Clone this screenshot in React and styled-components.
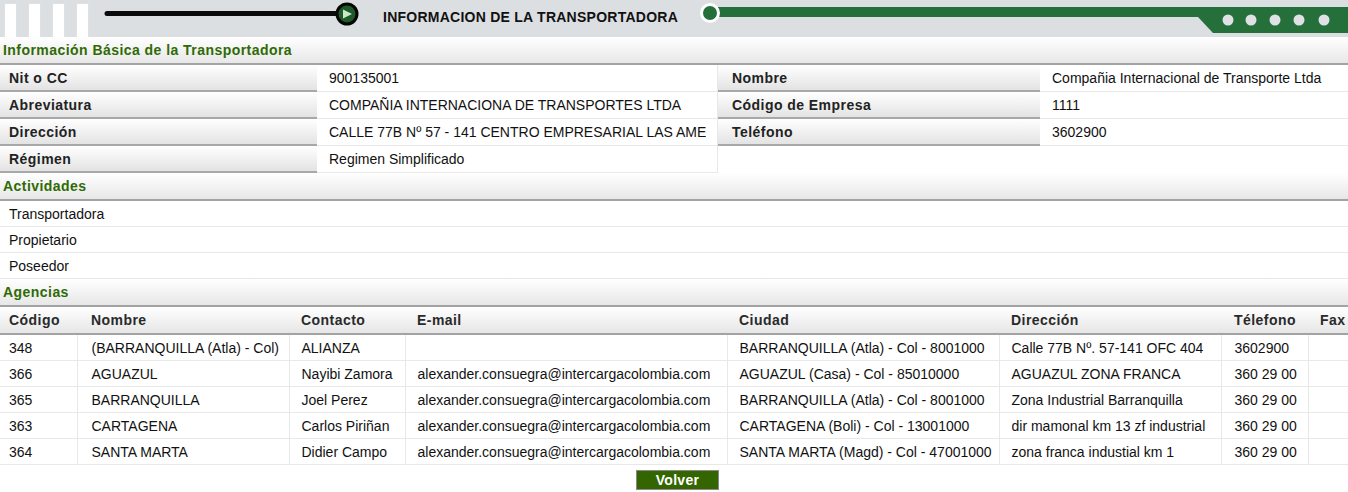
import React from 'react'
import styled, { createGlobalStyle } from 'styled-components'

const GlobalStyle = createGlobalStyle`
  html, body {
    margin: 0;
    padding: 0;
    background: #fff;
    overflow: hidden;
  }
  body {
    font-family: "Liberation Sans", Arial, sans-serif;
    font-size: 14px;
    color: #111;
  }
`

const Page = styled.div`
  width: 1348px;
  display: flex;
  flex-direction: column;
`

const Header = styled.header`
  display: flex;
  align-items: stretch;
  height: 37px;
  background: #dcdfe2;
  padding-left: 5px;
`

const Stripes = styled.div`
  display: flex;
  gap: 13px;
  padding-top: 4px;
`

const Stripe = styled.div`
  width: 11px;
  background: #fff;
  box-shadow: 0 0 1px #e9ecee;
`

const Slider = styled.svg`
  margin-left: 12px;
  flex: none;
`

const HeaderTitle = styled.h1`
  margin: 0 0 0 21px;
  font-size: 14px;
  letter-spacing: 0.25px;
  font-weight: bold;
  color: #111;
  line-height: 35px;
  white-space: nowrap;
`

const GreenTrack = styled.div`
  flex: 1;
  display: flex;
  margin-left: 22px;
`

const GreenDot = styled.div`
  width: 14px;
  height: 14px;
  margin-top: 3px;
  border-radius: 50%;
  background: #256f3b;
  border: 3px solid #fff;
  flex: none;
  position: relative;
  z-index: 1;
`

const GreenBar = styled.div`
  flex: 1;
  height: 10px;
  margin-top: 7px;
  margin-left: -2px;
  background: #256f3b;
`

const GreenEnd = styled.svg`
  flex: none;
  display: block;
`

const SectionBand = styled.div`
  height: 26px;
  display: flex;
  align-items: center;
  padding-left: 3px;
  background: linear-gradient(#ffffff, #e7e7e7);
  border-bottom: 2px solid #a3a3a3;
  color: #2f6a05;
  font-weight: bold;
  font-size: 14px;
  letter-spacing: 0.45px;
`

const InfoGrid = styled.div`
  display: grid;
  grid-template-columns: 317px 401px 322px 1fr;
`

const InfoLabel = styled.div`
  height: 25px;
  display: flex;
  align-items: center;
  padding-left: ${({ $pad }) => $pad || 9}px;
  background: linear-gradient(#ffffff, #e3e3e3);
  border-bottom: 2px solid #a8a8a8;
  font-weight: bold;
  letter-spacing: 0.45px;
  color: #222;
`

const InfoValue = styled.div`
  height: 26px;
  padding: 0 11px 0 12px;
  background: #fff;
  border-bottom: 1px solid #e8e8e8;
  border-right: ${({ $edge }) => ($edge ? '1px solid #e8e8e8' : 'none')};
  min-width: 0;
  color: #111;
`

const ValueText = styled.span`
  display: block;
  line-height: 26px;
  white-space: nowrap;
  overflow: hidden;
`

const Blank = styled.div`
  height: 27px;
`

const ListRow = styled.div`
  height: 25px;
  display: flex;
  align-items: center;
  padding-left: 9px;
  border-bottom: 1px solid #e8e8e8;
`

const Table = styled.table`
  width: 1368px;
  border-collapse: collapse;
  table-layout: fixed;
`

const Th = styled.th`
  height: 26px;
  padding: 0 0 0 ${({ $pad }) => $pad || 12}px;
  text-align: left;
  font-weight: bold;
  letter-spacing: 0.45px;
  color: #2a2a2a;
  background: linear-gradient(#ffffff, #e6e6e6);
  border-bottom: 2px solid #a3a3a3;
  white-space: nowrap;
  overflow: hidden;
`

const Td = styled.td`
  height: 25px;
  padding: 0 0 0 ${({ $pad }) => $pad || 12}px;
  border-bottom: 1px solid #e8e8e8;
  border-left: ${({ $first }) => ($first ? 'none' : '1px solid #e8e8e8')};
  white-space: nowrap;
  overflow: hidden;
  color: #111;
`

const Footer = styled.div`
  display: flex;
  justify-content: center;
  padding: 5px 0 0 7px;
`

const Button = styled.button`
  width: 83px;
  height: 20px;
  background: #336600;
  color: #fff;
  font-family: "Liberation Sans", Arial, sans-serif;
  font-weight: bold;
  font-size: 14px;
  letter-spacing: 0.3px;
  border: 1px solid #8a8a8a;
  padding: 0;
  cursor: pointer;
`

const info = [
  ['Nit o CC', '900135001', 'Nombre', 'Compañia Internacional de Transporte Ltda'],
  ['Abreviatura', 'COMPAÑIA INTERNACIONA DE TRANSPORTES LTDA', 'Código de Empresa', '1111'],
  ['Dirección', 'CALLE 77B Nº 57 - 141 CENTRO EMPRESARIAL LAS AMERICAS', 'Teléfono', '3602900'],
  ['Régimen', 'Regimen Simplificado'],
]

const actividades = ['Transportadora', 'Propietario', 'Poseedor']

const cols = [
  { title: 'Código', width: 77, pad: 9 },
  { title: 'Nombre', width: 212, pad: 14 },
  { title: 'Contacto', width: 116 },
  { title: 'E-mail', width: 322 },
  { title: 'Ciudad', width: 272 },
  { title: 'Dirección', width: 222 },
  { title: 'Télefono', width: 87, pad: 13 },
  { title: 'Fax', width: 60 },
]

const mail = 'alexander.consuegra@intercargacolombia.com'

const agencias = [
  ['348', '(BARRANQUILLA (Atla) - Col)', 'ALIANZA', '', 'BARRANQUILLA (Atla) - Col - 8001000', 'Calle 77B Nº. 57-141 OFC 404', '3602900', ''],
  ['366', 'AGUAZUL', 'Nayibi Zamora', mail, 'AGUAZUL (Casa) - Col - 85010000', 'AGUAZUL ZONA FRANCA', '360 29 00', ''],
  ['365', 'BARRANQUILLA', 'Joel Perez', mail, 'BARRANQUILLA (Atla) - Col - 8001000', 'Zona Industrial Barranquilla', '360 29 00', ''],
  ['363', 'CARTAGENA', 'Carlos Piriñan', mail, 'CARTAGENA (Boli) - Col - 13001000', 'dir mamonal km 13 zf industrial', '360 29 00', ''],
  ['364', 'SANTA MARTA', 'Didier Campo', mail, 'SANTA MARTA (Magd) - Col - 47001000', 'zona franca industial km 1', '360 29 00', ''],
]

const TopBar = () => (
  <Header>
    <Stripes>
      <Stripe />
      <Stripe />
      <Stripe />
      <Stripe />
    </Stripes>
    <Slider width="262" height="36" viewBox="0 0 262 36">
      <line x1="7" y1="13.5" x2="240" y2="13.5" stroke="#0a0a0a" strokeWidth="5" strokeLinecap="round" />
      <circle cx="247" cy="14" r="10" fill="#1f5a2a" stroke="#050505" strokeWidth="3" />
      <path d="M243 9.5 L252 14 L243 18.5 Z" fill="#c9e8c9" />
    </Slider>
    <HeaderTitle>INFORMACION DE LA TRANSPORTADORA</HeaderTitle>
    <GreenTrack>
      <GreenDot />
      <GreenBar />
      <GreenEnd width="150" height="36" viewBox="0 0 150 36">
        <path d="M0 7 H150 V33 H15 L0 17 Z" fill="#256f3b" />
        {[30, 53, 77, 101, 126].map((x) => (
          <circle key={x} cx={x} cy="20" r="5.5" fill="#dfe2e4" />
        ))}
      </GreenEnd>
    </GreenTrack>
  </Header>
)

const App = () => (
  <Page>
    <GlobalStyle />
    <TopBar />

    <SectionBand>Información Básica de la Transportadora</SectionBand>
    <InfoGrid>
      {info.map(([l1, v1, l2, v2]) => (
        <React.Fragment key={l1}>
          <InfoLabel>{l1}</InfoLabel>
          <InfoValue $edge><ValueText>{v1}</ValueText></InfoValue>
          {l2 ? <InfoLabel $pad={14}>{l2}</InfoLabel> : <Blank />}
          {l2 ? <InfoValue><ValueText>{v2}</ValueText></InfoValue> : <Blank />}
        </React.Fragment>
      ))}
    </InfoGrid>

    <SectionBand>Actividades</SectionBand>
    {actividades.map((a) => (
      <ListRow key={a}>{a}</ListRow>
    ))}

    <SectionBand>Agencias</SectionBand>
    <Table>
      <colgroup>
        {cols.map((c) => (
          <col key={c.title} style={{ width: c.width }} />
        ))}
      </colgroup>
      <thead>
        <tr>
          {cols.map((c) => (
            <Th key={c.title} $pad={c.pad}>{c.title}</Th>
          ))}
        </tr>
      </thead>
      <tbody>
        {agencias.map((row) => (
          <tr key={row[0]}>
            {row.map((cell, i) => (
              <Td key={i} $first={i === 0} $pad={cols[i].pad}>{cell}</Td>
            ))}
          </tr>
        ))}
      </tbody>
    </Table>

    <Footer>
      <Button>Volver</Button>
    </Footer>
  </Page>
)

export default App
